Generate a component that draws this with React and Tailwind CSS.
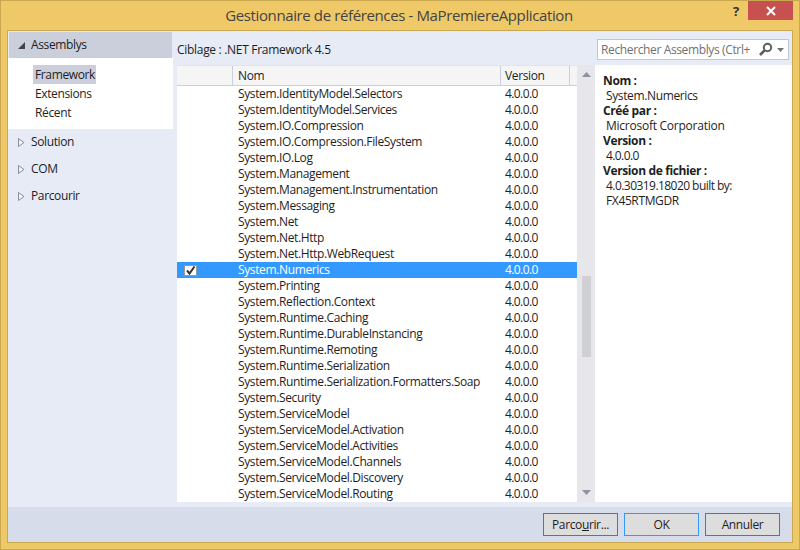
const rows = [
  "System.IdentityModel.Selectors",
  "System.IdentityModel.Services",
  "System.IO.Compression",
  "System.IO.Compression.FileSystem",
  "System.IO.Log",
  "System.Management",
  "System.Management.Instrumentation",
  "System.Messaging",
  "System.Net",
  "System.Net.Http",
  "System.Net.Http.WebRequest",
  "System.Numerics",
  "System.Printing",
  "System.Reflection.Context",
  "System.Runtime.Caching",
  "System.Runtime.DurableInstancing",
  "System.Runtime.Remoting",
  "System.Runtime.Serialization",
  "System.Runtime.Serialization.Formatters.Soap",
  "System.Security",
  "System.ServiceModel",
  "System.ServiceModel.Activation",
  "System.ServiceModel.Activities",
  "System.ServiceModel.Channels",
  "System.ServiceModel.Discovery",
  "System.ServiceModel.Routing",
];

function Collapsed({ label, className }) {
  return (
    <div className={`flex items-center h-[16px] pl-[10px] ${className}`}>
      <svg width="7" height="9" viewBox="0 0 7 9" className="mr-[6px]">
        <path d="M0.5 0.5 L6 4.5 L0.5 8.5 Z" fill="#f4f5f8" stroke="#8a8d96" />
      </svg>
      <span>{label}</span>
    </div>
  );
}

function Btn({ children, className = "border-[#707070]" }) {
  return (
    <button className={`w-[75px] h-[23px] bg-[#dddddd] border text-[#1e1e1e] flex items-center justify-center ${className}`}>
      {children}
    </button>
  );
}

function Details() {
  return (
    <div className="w-[197px] bg-white pt-[8px] pl-[8px] text-[#1e1e1e] leading-[15px]">
      <div className="font-bold">Nom :</div>
      <div className="pl-[3px]">System.Numerics</div>
      <div className="font-bold">Créé par :</div>
      <div className="pl-[3px] tracking-[-0.25px]">Microsoft Corporation</div>
      <div className="font-bold">Version :</div>
      <div className="pl-[3px] tracking-[-0.6px]">4.0.0.0</div>
      <div className="font-bold">Version de fichier :</div>
      <div className="pl-[3px] tracking-[-0.55px]">4.0.30319.18020 built by:</div>
      <div className="pl-[3px]">FX45RTMGDR</div>
    </div>
  );
}

export default function App() {
  return (
    <div className="w-[800px] h-[550px] bg-[#efc868] border border-[#c9a850] flex flex-col font-['Open_Sans',sans-serif] text-[12px] tracking-[-0.37px] text-[#1e1e1e] overflow-hidden">
      {/* Title bar */}
      <div className="h-[29px] flex shrink-0 relative">
        <div className="flex-1 text-center text-[15px] tracking-[-0.38px] leading-[29px] text-[#444444] pr-[2px]">
          Gestionnaire de références - MaPremiereApplication
        </div>
        <div className="absolute left-[732px] top-[1px] font-bold text-[13px] text-[#333333]">?</div>
        <div className="absolute left-[747px] top-0 w-[45px] h-[19px] bg-[#c75050] flex items-center justify-center">
          <svg width="10" height="10" viewBox="0 0 10 10">
            <path d="M1 1 L9 9 M9 1 L1 9" stroke="#ffffff" strokeWidth="2" />
          </svg>
        </div>
      </div>

      {/* Client */}
      <div className="mx-[6px] mb-[6px] flex-1 border border-[#c9a850] flex flex-col bg-[#e6ebf5]">
        <div className="flex-1 flex">
          {/* Left nav */}
          <div className="w-[165px] shrink-0">
            <div className="h-[26px] mt-px mx-px bg-[#cbcfdc] flex items-center pl-[9px]">
              <svg width="7" height="7" viewBox="0 0 7 7" className="mr-[6px]">
                <path d="M7 0 L7 7 L0 7 Z" fill="#444444" />
              </svg>
              <span>Assemblys</span>
            </div>
            <div className="bg-white h-[71px] pl-[25px] pt-[7px] flex flex-col">
              <div className="w-[63px] h-[19px] bg-[#cccedb] pl-[2px] leading-[19px]">Framework</div>
              <div className="h-[19px] pl-[2px] leading-[19px]">Extensions</div>
              <div className="h-[19px] pl-[2px] leading-[19px]">Récent</div>
            </div>
            <Collapsed label="Solution" className="mt-[5px]" />
            <Collapsed label="COM" className="mt-[11px]" />
            <Collapsed label="Parcourir" className="mt-[11px]" />
          </div>

          {/* Right */}
          <div className="flex-1 pl-[4px] flex flex-col pb-[5px] min-w-0">
            <div className="h-[34px] shrink-0 flex items-center justify-between pt-[2px]">
              <span className="mt-[2px] tracking-[-0.3px]">Ciblage : .NET Framework 4.5</span>
              <div className="w-[192px] h-[21px] mr-[3px] mt-[1px] bg-white border border-[#c0c6d6] flex items-center pl-[3px] pr-[4px] text-[#717171]">
                <span className="flex-1 whitespace-nowrap overflow-hidden">Rechercher Assemblys (Ctrl+</span>
                <svg width="16" height="15" viewBox="0 0 16 15" className="ml-[3px] shrink-0">
                  <circle cx="9.5" cy="5.5" r="3.7" fill="none" stroke="#5d5d5d" strokeWidth="2" />
                  <path d="M6.5 8.5 L2 13" stroke="#5d5d5d" strokeWidth="2.6" />
                </svg>
                <svg width="7" height="4" viewBox="0 0 7 4" className="ml-[3px] shrink-0">
                  <path d="M0 0 L7 0 L3.5 4 Z" fill="#717171" />
                </svg>
              </div>
            </div>

            <div className="flex-1 flex min-h-0">
              {/* List */}
              <div className="w-[400px] bg-white shrink-0">
                <div className="h-[21px] bg-[#f5f5f5] border-t border-b border-[#e3e3ea] border-b-[#cccedb] flex leading-[19px]">
                  <div className="w-[56px] border-r border-[#cccedb]" />
                  <div className="w-[268px] border-r border-[#cccedb] pl-[5px]">Nom</div>
                  <div className="w-[69px] border-r border-[#cccedb] pl-[4px]">Version</div>
                </div>
                {rows.map((r) => {
                  const on = r === "System.Numerics";
                  return (
                    <div key={r} className={`h-[16px] flex leading-[16px] whitespace-nowrap ${on ? "bg-[#3399ff] text-white" : ""}`}>
                      <div className="w-[56px] flex items-center pl-[7px]">
                        {on && (
                          <svg width="13" height="11" viewBox="0 0 13 11">
                            <rect x="0" y="0" width="13" height="11" fill="#ffffff" />
                            <rect x="0.5" y="0.5" width="12" height="10" fill="none" stroke="#333333" strokeDasharray="1 1" />
                            <path d="M3 5.5 L5.5 8.5 L10.5 1.5" fill="none" stroke="#333333" strokeWidth="2" />
                          </svg>
                        )}
                      </div>
                      <div className="w-[268px] pl-[5px]">{r}</div>
                      <div className="pl-[4px] tracking-[-0.6px]">4.0.0.0</div>
                    </div>
                  );
                })}
              </div>

              {/* Scrollbar */}
              <div className="w-[18px] shrink-0 bg-[#e6e6eb] flex flex-col items-center pt-[7px] pb-[7px]">
                <svg width="9" height="5" viewBox="0 0 9 5">
                  <path d="M0 5 L9 5 L4.5 0 Z" fill="#8f92a0" />
                </svg>
                <div className="w-[9px] h-[81px] bg-[#cfd0d4] mt-[199px]" />
                <div className="flex-1" />
                <svg width="9" height="5" viewBox="0 0 9 5">
                  <path d="M0 0 L9 0 L4.5 5 Z" fill="#8f92a0" />
                </svg>
              </div>

              <Details />
            </div>
          </div>
        </div>

        {/* Footer */}
        <div className="h-[35px] shrink-0 bg-[#d6dce9] flex items-center justify-end gap-[6px] pr-[12px]">
          <Btn>
            <span>
              Parco<span className="underline">u</span>rir...
            </span>
          </Btn>
          <Btn className="border-[#3399ff]">OK</Btn>
          <Btn>Annuler</Btn>
        </div>
      </div>
    </div>
  );
}
